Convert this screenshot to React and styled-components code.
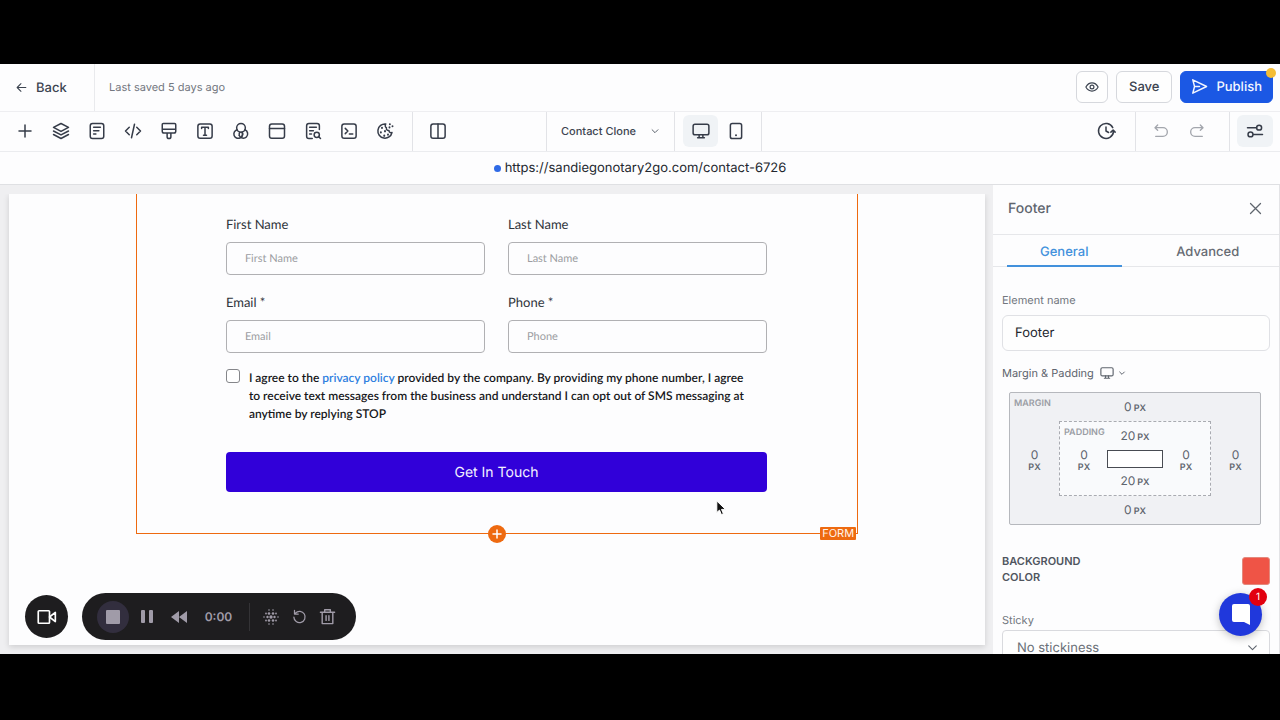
import React from 'react'
import styled, { createGlobalStyle } from 'styled-components'

const GlobalStyle = createGlobalStyle`
  * {
    box-sizing: border-box;
    text-rendering: geometricPrecision;
  }

  body {
    margin: 0;
    background: #000;
    color: #3c4450;
    font-family: Inter, "Liberation Sans", sans-serif;
    font-size: 12px;
  }

  button,
  input,
  select {
    font: inherit;
    color: inherit;
  }

  button {
    cursor: pointer;
  }
`

const Screen = styled.div`
  height: 100vh;
  padding: 64px 0 66px;
  background: #000;
`

const Editor = styled.div`
  position: relative;
  display: flex;
  flex-direction: column;
  height: 100%;
  overflow: hidden;
  background: #fdfdfe;
`

/* header */

const Header = styled.header`
  display: flex;
  align-items: center;
  flex: none;
  height: 48px;
  padding-right: 7px;
  border-bottom: 1px solid #eeeef1;
`

const BackButton = styled.button`
  display: flex;
  align-items: center;
  gap: 8px;
  width: 95px;
  height: 100%;
  padding: 0 0 0 15px;
  border: 0;
  border-right: 1px solid #e9eaed;
  background: none;
  font-size: 13px;
  font-weight: 500;
`

const Saved = styled.span`
  flex: 1;
  padding: 0 0 2px 14px;
  color: #737780;
  font-size: 11px;
`

const HeaderActions = styled.div`
  display: flex;
  gap: 8px;
  padding-bottom: 2px;
`

const HeaderButton = styled.button`
  position: relative;
  display: flex;
  align-items: center;
  justify-content: center;
  gap: 8px;
  height: 32px;
  min-width: 32px;
  padding: 0 ${(p) => p.$pad}px;
  border: 1px solid ${(p) => (p.$primary ? '#1b58e4' : '#d6d8dd')};
  border-radius: 6px;
  background: ${(p) => (p.$primary ? '#1b58e4' : '#fefefe')};
  color: ${(p) => (p.$primary ? '#f3f6ff' : '#3c4450')};
  font-size: 13px;
  font-weight: 500;
`

const Dot = styled.span`
  position: absolute;
  top: -4px;
  right: -4px;
  width: 10px;
  height: 10px;
  border-radius: 50%;
  background: #f5bd35;
`

/* toolbar */

const Toolbar = styled.div`
  display: flex;
  flex: none;
  height: 40px;
  border-bottom: 1px solid #ebecef;
`

const ToolGroup = styled.div`
  display: flex;
  align-items: center;
  flex: ${(p) => (p.$grow ? '1' : 'none')};
  justify-content: ${(p) => (p.$end ? 'flex-end' : 'flex-start')};
  width: ${(p) => (p.$width ? p.$width + 'px' : 'auto')};
  padding: 0 ${(p) => p.$pad || 0}px 2px;
  border-right: ${(p) => (p.$last ? '0' : '1px solid #e2e3e7')};
`

const ToolButton = styled.button`
  display: flex;
  align-items: center;
  justify-content: center;
  width: 36px;
  height: 32px;
  padding: 0;
  border: 0;
  border-radius: 6px;
  background: ${(p) => (p.$active ? '#f0f3f6' : 'none')};
  color: ${(p) => (p.$muted ? '#a3a6ad' : '#363c49')};
`

const PageButton = styled.button`
  display: flex;
  align-items: center;
  justify-content: space-between;
  width: 100%;
  padding: 0;
  border: 0;
  background: none;
  font-size: 11px;
  font-weight: 500;
`

const UrlBar = styled.div`
  display: flex;
  align-items: center;
  justify-content: center;
  gap: 4px;
  flex: none;
  height: 33px;
  border-bottom: 1px solid #dfe0e3;
  color: #23272e;
  font-size: 13px;

  &::before {
    content: '';
    width: 7px;
    height: 7px;
    border-radius: 50%;
    background: #2f6ae6;
  }
`

/* canvas */

const Workspace = styled.div`
  display: flex;
  flex: 1;
  min-height: 0;
`

const Canvas = styled.main`
  flex: 1;
  display: flex;
  padding: 9px 8px 9px 9px;
  background: #efeff1;
`

const Page = styled.div`
  flex: 1;
  background: #fdfdfe;
  box-shadow: 0 2px 6px rgba(0, 0, 0, 0.14);
  clip-path: inset(0 -8px -9px -9px);
`

const Form = styled.form`
  position: relative;
  width: 74%;
  height: 340px;
  margin: 0 auto;
  padding: 22px 90px 0 89px;
  border: 1px solid #ee6a10;
  border-top: 0;
  font-family: Lato, sans-serif;
  font-size: 13px;
`

const Fields = styled.div`
  display: grid;
  grid-template-columns: 1fr 1fr;
  gap: 19px 23px;
`

const Field = styled.label`
  display: flex;
  flex-direction: column;
  gap: 9px;
  color: #30353c;
  line-height: 17px;
`

const FieldInput = styled.input`
  width: 100%;
  height: 33px;
  padding: 0 18px;
  border: 1px solid #b0b0b3;
  border-radius: 4px;
  background: #fdfdfe;
  font-size: 11px;

  &::placeholder {
    color: #9c9da2;
    opacity: 1;
  }
`

const Consent = styled.label`
  display: flex;
  gap: 9px;
  margin-top: 16px;
  padding-right: 14px;
  color: #17181b;
  font-size: 12px;
  font-weight: 600;
  line-height: 18px;

  a {
    color: #2f80e0;
    text-decoration: none;
  }
`

const CheckBox = styled.input`
  appearance: none;
  flex: none;
  width: 14px;
  height: 14px;
  margin: 0;
  border: 1px solid #85868a;
  border-radius: 3px;
  background: #fff;
`

const SubmitButton = styled.button`
  width: 100%;
  height: 40px;
  margin-top: 29px;
  border: 0;
  border-radius: 4px;
  background: #3100d9;
  color: #f4f1ff;
  font-family: Inter, sans-serif;
  font-size: 14px;
`

const AddButton = styled.button`
  position: absolute;
  bottom: -10px;
  left: 50%;
  display: flex;
  align-items: center;
  justify-content: center;
  width: 18px;
  height: 18px;
  margin-left: -9px;
  padding: 0;
  border: 0;
  border-radius: 50%;
  background: #ee6a10;
  color: #fff;
`

const FormTag = styled.span`
  position: absolute;
  right: 1px;
  bottom: -7px;
  padding: 0 2px;
  border-radius: 1px;
  background: #ee6a10;
  color: #fff3ea;
  font-family: Inter, sans-serif;
  font-size: 11px;
  line-height: 13px;
`

const Pointer = styled.svg`
  position: absolute;
  top: 436px;
  left: 716px;
`

/* side panel */

const Panel = styled.aside`
  width: 287px;
  flex: none;
  overflow: hidden;
  border-right: 1px solid #e3e3e6;
  background: #fdfdfe;
  color: #5f656e;
`

const PanelHead = styled.div`
  display: flex;
  align-items: center;
  justify-content: space-between;
  height: 50px;
  padding: 0 16px 2px 15px;
  border-bottom: 1px solid #e6e7ea;

  h2 {
    margin: 0;
    font-size: 14px;
    font-weight: 500;
  }
`

const CloseButton = styled.button`
  display: flex;
  padding: 0;
  border: 0;
  background: none;
`

const Tabs = styled.div`
  display: grid;
  grid-template-columns: 1fr 1fr;
  column-gap: 29px;
  height: 32px;
  padding: 0 14px;
  border-bottom: 1px solid #e6e7ea;
`

const Tab = styled.button`
  height: 32px;
  padding: 3px 0 0;
  border: 0;
  border-bottom: 2px solid ${(p) => (p.$active ? '#4291dc' : 'transparent')};
  background: none;
  color: ${(p) => (p.$active ? '#4291dc' : '#666b73')};
  font-size: 13px;
  font-weight: 500;
`

const PanelBody = styled.div`
  padding: 25px 9px 0;
`

const PanelLabel = styled.label`
  display: block;
  color: #72777f;
  font-size: 11px;
  line-height: 16px;
`

const NameInput = styled.input`
  width: 100%;
  height: 36px;
  margin-top: 7px;
  padding: 0 12px;
  border: 1px solid #e0e1e5;
  border-radius: 6px;
  background: #fefefe;
  color: #23272e;
  font-size: 13px;
`

const SpacingTitle = styled.div`
  display: flex;
  align-items: center;
  gap: 6px;
  margin-top: 14px;
  font-size: 11px;
  line-height: 16px;
`

const DeviceButton = styled.button`
  display: flex;
  align-items: center;
  gap: 4px;
  padding: 0;
  border: 0;
  background: none;
`

const SpacingBox = styled.div`
  position: relative;
  display: grid;
  grid-template-columns: ${(p) => p.$side}px minmax(0, 1fr) ${(p) => p.$side}px;
  grid-template-rows: 28px minmax(0, 1fr) 28px;
  place-items: center;
`

const MarginBox = styled(SpacingBox)`
  height: 133px;
  margin: 11px 9px 0 7px;
  border: 1px solid #b6b8bd;
  border-radius: 2px;
  background: #f0f1f4;
`

const PaddingBox = styled(SpacingBox)`
  grid-column: 2;
  grid-row: 2;
  width: 100%;
  height: 100%;
  border: 1px dashed #a9abb1;
  background: #f9fafc;
`

const SpacingCaption = styled.span`
  position: absolute;
  top: 5px;
  left: 4px;
  color: #9a9da4;
  font-size: 9px;
  font-weight: 600;
  line-height: 11px;
`

const Value = styled.span`
  grid-column: ${(p) => p.$col};
  grid-row: ${(p) => p.$row};
  display: flex;
  flex-direction: ${(p) => (p.$row === 2 ? 'column' : 'row')};
  align-items: ${(p) => (p.$row === 2 ? 'center' : 'baseline')};
  column-gap: 2px;
  padding-top: ${(p) => (p.$row === 2 ? '4px' : '0')};
  font-size: 12px;
  line-height: 13px;

  small {
    font-size: 9px;
    font-weight: 600;
  }
`

const Core = styled.span`
  grid-column: 2;
  grid-row: 2;
  width: 56px;
  height: 18px;
  border: 1px solid #484b52;
  background: #fff;
`

const ColorRow = styled.div`
  display: flex;
  align-items: flex-end;
  justify-content: space-between;
  margin-top: 28px;

  label {
    width: 110px;
    color: #50555e;
    font-size: 11px;
    font-weight: 600;
    line-height: 16px;
  }
`

const Swatch = styled.button`
  width: 28px;
  height: 28px;
  border: 1px solid #e3897d;
  border-radius: 3px;
  background: #ef5446;
`

const StickyBlock = styled.div`
  margin-top: 27px;
`

const SelectWrap = styled.div`
  position: relative;
  margin-top: 2px;

  svg {
    position: absolute;
    top: 11px;
    right: 11px;
    pointer-events: none;
  }
`

const StickySelect = styled.select`
  appearance: none;
  width: 100%;
  height: 36px;
  padding: 0 14px;
  border: 1px solid #d9dade;
  border-radius: 4px;
  background: #fefefe;
  color: #6b7078;
  font-size: 13px;
`

/* floating things */

const ChatButton = styled.button`
  position: absolute;
  right: 18px;
  bottom: 18px;
  display: flex;
  align-items: center;
  justify-content: center;
  width: 43px;
  height: 43px;
  padding: 0;
  border: 0;
  border-radius: 50%;
  background: #2038dc;
  box-shadow: 0 2px 8px rgba(0, 0, 0, 0.25);
`

const ChatBadge = styled.span`
  position: absolute;
  top: -5px;
  right: -5px;
  width: 18px;
  height: 18px;
  border-radius: 50%;
  background: #e2000f;
  color: #fff;
  font-size: 10px;
  line-height: 18px;
`

const Recorder = styled.div`
  position: absolute;
  left: 25px;
  bottom: 14px;
  display: flex;
  align-items: center;
  gap: 14px;
`

const CameraButton = styled.button`
  display: flex;
  align-items: center;
  justify-content: center;
  width: 43px;
  height: 43px;
  padding: 0;
  border: 0;
  border-radius: 50%;
  background: #1e1d1f;
  color: #fff;
`

const RecorderBar = styled.div`
  display: flex;
  align-items: center;
  height: 47px;
  padding: 0 15px;
  border-radius: 24px;
  background: #1e1d1f;
  color: #a09ba8;
`

const RecorderButton = styled.button`
  display: flex;
  align-items: center;
  justify-content: center;
  width: ${(p) => p.$width || 32}px;
  height: 32px;
  padding: 0;
  border: 0;
  border-radius: 50%;
  background: ${(p) => (p.$active ? '#322e3e' : 'none')};
`

const Time = styled.span`
  width: 51px;
  text-align: center;
  font-size: 12px;
  font-weight: 600;
`

const Separator = styled.span`
  width: 1px;
  height: 28px;
  margin: 0 7px 0 5px;
  background: #343336;
`

/* 24 unit line icons */
const icons = {
  back: <path d="M20 12H4M11 5l-7 7 7 7" />,
  plus: <path d="M12 4v16M4 12h16" />,
  layers: (
    <path d="M12 2 22 7.2 12 12.5 2 7.2ZM2 12l10 5.2L22 12M2 16.7 12 22l10-5.3" />
  ),
  page: (
    <>
      <rect x="3" y="2" width="18" height="20" rx="3" />
      <path d="M7.5 7h9M7.5 11.5h7M7.5 16h3" />
    </>
  ),
  code: <path d="m17 17 5-5-5-5M7 7l-5 5 5 5M14 3l-4 18" />,
  brush: (
    <path d="M3 10V3.6C3 2.7 3.6 2 4.5 2h15c.9 0 1.5.7 1.5 1.6V10M3 9.5h18v2.7c0 1.6-.8 2.4-2.4 2.4H5.4c-1.6 0-2.4-.8-2.4-2.4ZM9.5 14.6v5a2.5 2.5 0 0 0 5 0v-5" />
  ),
  text: (
    <>
      <rect x="2.5" y="2.5" width="19" height="19" rx="3" />
      <path d="M7.5 8.5V7h9v1.5M12 7v10.5M10 17.5h4" />
    </>
  ),
  colors: (
    <>
      <circle cx="12" cy="7.8" r="5.8" />
      <path d="M6.8 10.4a5.8 5.8 0 1 0 6.7 3" />
      <path d="M17.3 10.4a5.8 5.8 0 1 1-7.6 7.5" />
      <path d="M10.5 13.5a5.8 5.8 0 0 0-.8 4.4M12 20.5a5.8 5.8 0 0 0 1.5-7" />
    </>
  ),
  browser: (
    <>
      <rect x="2" y="2.5" width="20" height="19" rx="3" />
      <path d="M2 8.5h20" />
    </>
  ),
  search: (
    <>
      <path d="M20.5 10V5c0-1.7-1-3-3-3h-11c-2 0-3 1.3-3 3v14c0 1.7 1 3 3 3H11M7.5 7h9M7.5 11.5h5M7.5 16H10" />
      <circle cx="17" cy="17" r="3.5" />
      <path d="m22 22-2.5-2.5" />
    </>
  ),
  terminal: (
    <>
      <rect x="2.5" y="2.5" width="19" height="19" rx="3" />
      <path d="m7 8.5 3.5 3.5L7 15.5M12.5 16H17" />
    </>
  ),
  cookie: (
    <>
      <path d="M13 2.6A9.5 9.5 0 1 0 21.3 14c-2 .6-4-.5-4-2.7-2.7 0-4-1.6-3.4-3.6-1.8-.7-2-3.2-.9-5.1" />
      <path d="M8 7.5v.5M6.5 13.5v.5M12 12v.5M11 18v.5M16 16.5v.5M18.5 3v.1M18 7v.2M22 5.5v.2" strokeWidth="2.6" />
    </>
  ),
  columns: (
    <>
      <rect x="2.5" y="2.5" width="19" height="19" rx="3" />
      <path d="M12 2.5v19" />
    </>
  ),
  desktop: (
    <>
      <rect x="1.5" y="3" width="21" height="14" rx="2.5" />
      <path d="M9.5 17v3.5M14.5 17v3.5M7.5 21h9" />
    </>
  ),
  phone: (
    <>
      <rect x="4.5" y="2" width="15" height="20" rx="2.5" />
      <path d="M12 17.5v.1" strokeWidth="2.6" />
    </>
  ),
  history: (
    <path d="M22 12.5A10 10 0 1 1 21 7.5M12 6.5V12l3.5 2M18.5 13.5l3-2.8 2.7 2.8" />
  ),
  undo: <path d="M3 7h12a6 6 0 0 1 0 13H4M7 3 3 7l4 4" />,
  redo: <path d="M21 7H9a6 6 0 0 0 0 13h11M17 3l4 4-4 4" />,
  sliders: (
    <>
      <path d="M2 7.5h12M10 16.5h12" />
      <circle cx="17.5" cy="7.5" r="3.3" />
      <circle cx="6" cy="16.5" r="3.3" />
    </>
  ),
  eye: (
    <>
      <path d="M1.5 12C4 7.5 7.7 5 12 5s8 2.5 10.5 7C20 16.5 16.3 19 12 19S4 16.5 1.5 12Z" />
      <circle cx="12" cy="12" r="3.3" />
    </>
  ),
  send: <path d="M2.5 2.5 22 12 2.5 21.5 5 12ZM5 12h7" />,
  close: <path d="M4 4l16 16M20 4 4 20" />,
  down: <path d="m5 9 7 7 7-7" />,
  camera: (
    <>
      <rect x="1.5" y="4.5" width="13.5" height="15" rx="1" />
      <path d="m15 12 7-5.5v11Z" />
    </>
  ),
  restart: <path d="M5.5 6.5A9 9 0 1 1 3 13M4 2v6h6" />,
  trash: (
    <path d="M2 6h20M8 6V2.5h8V6M4.5 6v16h15V6M10 11v6.5M14 11v6.5" />
  ),
}

function Icon({ name, size = 18, stroke = 2 }) {
  return (
    <svg
      width={size}
      height={size}
      viewBox="0 0 24 24"
      fill="none"
      stroke="currentColor"
      strokeWidth={stroke}
      strokeLinecap="round"
      strokeLinejoin="round"
      overflow="visible"
      aria-hidden="true"
    >
      {icons[name]}
    </svg>
  )
}

const tools = [
  ['plus', 'Add element'],
  ['layers', 'Layers'],
  ['page', 'Pages'],
  ['code', 'Custom code'],
  ['brush', 'Styles'],
  ['text', 'Typography'],
  ['colors', 'Colors'],
  ['browser', 'Popup'],
  ['search', 'SEO'],
  ['terminal', 'Tracking code'],
  ['cookie', 'Cookies'],
]

const fields = [
  ['First Name', 'First Name'],
  ['Last Name', 'Last Name'],
  ['Email *', 'Email'],
  ['Phone *', 'Phone'],
]

function Spacing({ side, vertical }) {
  return (
    <>
      <Value $col={2} $row={1}>{vertical} <small>PX</small></Value>
      <Value $col={1} $row={2}>{side} <small>PX</small></Value>
      <Value $col={3} $row={2}>{side} <small>PX</small></Value>
      <Value $col={2} $row={3}>{vertical} <small>PX</small></Value>
    </>
  )
}

function TopBar() {
  return (
    <Header>
      <BackButton>
        <Icon name="back" size={13} />
        Back
      </BackButton>
      <Saved>Last saved 5 days ago</Saved>
      <HeaderActions>
        <HeaderButton $pad={0} aria-label="Preview">
          <Icon name="eye" size={14} />
        </HeaderButton>
        <HeaderButton $pad={12}>Save</HeaderButton>
        <HeaderButton $pad={10} $primary>
          <Icon name="send" size={17} />
          Publish
          <Dot />
        </HeaderButton>
      </HeaderActions>
    </Header>
  )
}

function Tools() {
  return (
    <Toolbar>
      <ToolGroup $width={413} $pad={7}>
        {tools.map(([name, label]) => (
          <ToolButton key={name} aria-label={label}>
            <Icon name={name} />
          </ToolButton>
        ))}
      </ToolGroup>
      <ToolGroup $width={134} $pad={7}>
        <ToolButton aria-label="Sections">
          <Icon name="columns" />
        </ToolButton>
      </ToolGroup>
      <ToolGroup $width={128} $pad={14}>
        <PageButton>
          Contact Clone
          <Icon name="down" size={10} />
        </PageButton>
      </ToolGroup>
      <ToolGroup $width={87} $pad={8}>
        <ToolButton $active aria-label="Desktop view">
          <Icon name="desktop" />
        </ToolButton>
        <ToolButton aria-label="Mobile view">
          <Icon name="phone" />
        </ToolButton>
      </ToolGroup>
      <ToolGroup $grow $end $pad={11}>
        <ToolButton aria-label="Version history">
          <Icon name="history" />
        </ToolButton>
      </ToolGroup>
      <ToolGroup $width={94} $pad={7}>
        <ToolButton $muted aria-label="Undo">
          <Icon name="undo" size={16} />
        </ToolButton>
        <ToolButton $muted aria-label="Redo">
          <Icon name="redo" size={16} />
        </ToolButton>
      </ToolGroup>
      <ToolGroup $last $pad={7}>
        <ToolButton $active aria-label="Settings">
          <Icon name="sliders" />
        </ToolButton>
      </ToolGroup>
    </Toolbar>
  )
}

function ContactForm() {
  return (
    <Form onSubmit={(e) => e.preventDefault()}>
      <Fields>
        {fields.map(([label, placeholder]) => (
          <Field key={label}>
            {label}
            <FieldInput placeholder={placeholder} />
          </Field>
        ))}
      </Fields>
      <Consent>
        <CheckBox type="checkbox" />
        <span>
          I agree to the <a href="#privacy">privacy policy</a> provided by the company. By
          providing my phone number, I agree to receive text messages from the business and
          understand I can opt out of SMS messaging at anytime by replying STOP
        </span>
      </Consent>
      <SubmitButton>Get In Touch</SubmitButton>
      <AddButton type="button" aria-label="Add below">
        <Icon name="plus" size={12} stroke={3} />
      </AddButton>
      <FormTag>FORM</FormTag>
    </Form>
  )
}

function SidePanel() {
  return (
    <Panel>
      <PanelHead>
        <h2>Footer</h2>
        <CloseButton aria-label="Close panel">
          <Icon name="close" size={15} />
        </CloseButton>
      </PanelHead>
      <Tabs>
        <Tab $active>General</Tab>
        <Tab>Advanced</Tab>
      </Tabs>
      <PanelBody>
        <PanelLabel htmlFor="element-name">Element name</PanelLabel>
        <NameInput id="element-name" defaultValue="Footer" />
        <SpacingTitle>
          Margin &amp; Padding
          <DeviceButton aria-label="Device">
            <Icon name="desktop" size={14} />
            <Icon name="down" size={8} stroke={3} />
          </DeviceButton>
        </SpacingTitle>
        <MarginBox $side={49}>
          <SpacingCaption>MARGIN</SpacingCaption>
          <Spacing side={0} vertical={0} />
          <PaddingBox $side={48}>
            <SpacingCaption>PADDING</SpacingCaption>
            <Spacing side={0} vertical={20} />
            <Core />
          </PaddingBox>
        </MarginBox>
        <ColorRow>
          <label htmlFor="background-color">BACKGROUND COLOR</label>
          <Swatch id="background-color" />
        </ColorRow>
        <StickyBlock>
          <PanelLabel htmlFor="sticky">Sticky</PanelLabel>
          <SelectWrap>
            <StickySelect id="sticky">
              <option>No stickiness</option>
            </StickySelect>
            <Icon name="down" size={13} />
          </SelectWrap>
        </StickyBlock>
      </PanelBody>
    </Panel>
  )
}

function RecorderControls() {
  return (
    <Recorder>
      <CameraButton aria-label="Camera">
        <Icon name="camera" size={20} />
      </CameraButton>
      <RecorderBar>
        <RecorderButton $active aria-label="Stop">
          <svg width="14" height="14">
            <rect width="14" height="14" rx="1" fill="currentColor" />
          </svg>
        </RecorderButton>
        <RecorderButton $width={36} aria-label="Pause">
          <svg width="12" height="13" fill="currentColor">
            <rect width="4" height="13" rx="1" />
            <rect x="8" width="4" height="13" rx="1" />
          </svg>
        </RecorderButton>
        <RecorderButton $width={28} aria-label="Rewind">
          <svg width="16" height="12" fill="currentColor">
            <path d="M8 0v12L0 6ZM16 0v12L8 6Z" />
          </svg>
        </RecorderButton>
        <Time>0:00</Time>
        <Separator />
        <RecorderButton $width={28} aria-label="Blur">
          <svg width="16" height="16" fill="currentColor">
            {[
              [6, 1, 0.8], [10, 1, 0.8],
              [3, 4.5, 0.9], [6, 4.5, 1.3], [10, 4.5, 1.3], [13, 4.5, 0.9],
              [1, 8, 0.8], [4.5, 8, 1.2], [8, 8, 1.7], [11.5, 8, 1.2], [15, 8, 0.8],
              [3, 11.5, 0.9], [6, 11.5, 1.3], [10, 11.5, 1.3], [13, 11.5, 0.9],
              [6, 15, 0.8], [10, 15, 0.8],
            ].map(([x, y, r]) => (
              <circle key={x + '-' + y} cx={x} cy={y} r={r} />
            ))}
          </svg>
        </RecorderButton>
        <RecorderButton $width={28} aria-label="Restart">
          <Icon name="restart" size={15} />
        </RecorderButton>
        <RecorderButton $width={28} aria-label="Delete">
          <Icon name="trash" size={17} />
        </RecorderButton>
      </RecorderBar>
    </Recorder>
  )
}

export default function App() {
  return (
    <Screen>
      <GlobalStyle />
      <Editor>
        <TopBar />
        <Tools />
        <UrlBar>https://sandiegonotary2go.com/contact-6726</UrlBar>
        <Workspace>
          <Canvas>
            <Page>
              <ContactForm />
            </Page>
          </Canvas>
          <SidePanel />
        </Workspace>
        <RecorderControls />
        <ChatButton aria-label="Open chat">
          <svg width="20" height="22" viewBox="0 0 20 22" fill="#fff">
            <path d="M3 0h14a2 2 0 0 1 2 2v19l-6-3H3a2 2 0 0 1-2-2V2a2 2 0 0 1 2-2Z" />
          </svg>
          <ChatBadge>1</ChatBadge>
        </ChatButton>
        <Pointer width="11" height="16" viewBox="0 0 11 16">
          <path
            d="M.8 1v11.5l2.7-2.4 1.9 4.5 2-.9-1.9-4.3H9.5Z"
            fill="#111"
            stroke="#fff"
            strokeWidth="1"
          />
        </Pointer>
      </Editor>
    </Screen>
  )
}
